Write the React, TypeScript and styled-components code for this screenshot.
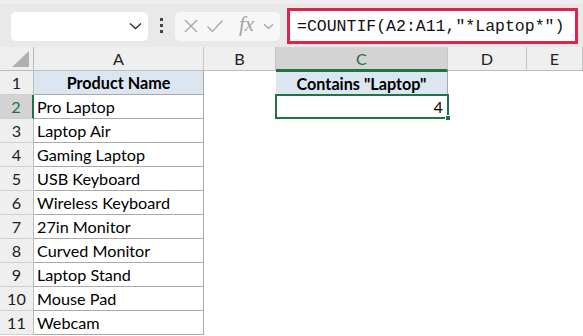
import styled, { createGlobalStyle } from "styled-components";

const GlobalStyle = createGlobalStyle`
  html, body {
    margin: 0;
    padding: 0;
    background: #ffffff;
  }
  * {
    box-sizing: border-box;
  }
`;

const products = [
  "Pro Laptop",
  "Laptop Air",
  "Gaming Laptop",
  "USB Keyboard",
  "Wireless Keyboard",
  "27in Monitor",
  "Curved Monitor",
  "Laptop Stand",
  "Mouse Pad",
  "Webcam",
];

const columns = ["A", "B", "C", "D", "E"];
const GREEN = "#217346";

export default function App() {
  return (
    <>
      <GlobalStyle />
      <Sheet>
        <FormulaBar>
          <NameBox>
            <Chevron width="13" height="8" viewBox="0 0 13 8">
              <path d="M1 1.5 L6.5 6.5 L12 1.5" fill="none" stroke="#333" strokeWidth="1.4" />
            </Chevron>
          </NameBox>
          <Dots>
            <span />
            <span />
            <span />
          </Dots>
          <FxBox>
            <svg width="16" height="16" viewBox="0 0 16 16">
              <path d="M2 2 L14 14 M14 2 L2 14" stroke="#a3a3a3" strokeWidth="1.2" fill="none" />
            </svg>
            <svg width="18" height="16" viewBox="0 0 18 16">
              <path d="M1.5 8.5 L6.5 13.5 L16.5 2.5" stroke="#a3a3a3" strokeWidth="1.2" fill="none" />
            </svg>
            <FxLabel>fx</FxLabel>
            <svg width="11" height="7" viewBox="0 0 11 7">
              <path d="M1 1.2 L5.5 5.5 L10 1.2" stroke="#a3a3a3" strokeWidth="1.2" fill="none" />
            </svg>
          </FxBox>
          <FormulaInput>=COUNTIF(A2:A11,"*Laptop*")</FormulaInput>
        </FormulaBar>

        <Grid>
          <Corner>
            <svg width="18" height="16" viewBox="0 0 18 16">
              <polygon points="17,0 17,16 0,16" fill="#b0b0b0" />
            </svg>
          </Corner>
          {columns.map((c) => (
            <ColHeader key={c} $active={c === "C"}>
              {c}
            </ColHeader>
          ))}

          {Array.from({ length: 11 }, (_, i) => {
            const row = i + 1;
            return [
              <RowHeader key={`h${row}`} $active={row === 2}>
                {row}
              </RowHeader>,
              <Cell
                key={`a${row}`}
                $bordered
                $fill={row === 1}
                $bold={row === 1}
                $align={row === 1 ? "center" : "left"}
              >
                {row === 1 ? "Product Name" : products[row - 2]}
              </Cell>,
              <Cell key={`b${row}`} />,
              row === 1 ? (
                <Cell key={`c${row}`} $bordered $fill $bold $align="center" $topGreen>
                  Contains "Laptop"
                </Cell>
              ) : row === 2 ? (
                <Selected key={`c${row}`}>
                  4
                  <Handle />
                </Selected>
              ) : (
                <Cell key={`c${row}`} />
              ),
              <Cell key={`d${row}`} />,
              <Cell key={`e${row}`} />,
            ];
          })}
        </Grid>
      </Sheet>
    </>
  );
}

const Sheet = styled.div`
  width: 583px;
  height: 336px;
  overflow: hidden;
  font-family: Lato, "Open Sans", sans-serif;
  color: #000;
`;

const FormulaBar = styled.div`
  height: 47px;
  background: #e9e9e9;
  display: flex;
  align-items: center;
  padding: 0 5px 0 11px;
  border-top: 4px solid #efefef;
`;

const NameBox = styled.div`
  width: 137px;
  height: 29px;
  margin-top: 1px;
  background: #fff;
  border-radius: 5px;
  display: flex;
  align-items: center;
  justify-content: flex-end;
  padding-right: 6px;
`;

const Chevron = styled.svg`
  display: block;
`;

const Dots = styled.div`
  width: 27px;
  display: flex;
  flex-direction: column;
  align-items: center;
  gap: 3px;

  & span {
    width: 3px;
    height: 3px;
    background: #444;
  }
`;

const FxBox = styled.div`
  width: 105px;
  height: 29px;
  margin-top: 1px;
  background: #f7f7f7;
  border-radius: 5px;
  display: flex;
  align-items: center;
  gap: 7px;
  padding-left: 8px;

  & svg {
    display: block;
    flex-shrink: 0;
  }
`;

const FxLabel = styled.span`
  font-family: "Liberation Serif", serif;
  font-style: italic;
  font-size: 21px;
  color: #a3a3a3;
  margin-left: 8px;
  margin-right: 2px;
  margin-top: -3px;
  flex-shrink: 0;
`;

const FormulaInput = styled.div`
  margin-left: 7px;
  width: 291px;
  height: 36px;
  margin-top: 1px;
  background: #fff;
  border: 3px solid #e1224b;
  display: flex;
  align-items: center;
  padding-left: 7px;
  font-family: "Liberation Mono", monospace;
  font-size: 16.5px;
  color: #111;
  white-space: nowrap;
`;

const Grid = styled.div`
  display: grid;
  grid-template-columns: 34px 170px 72px 172px 79px 1fr;
  grid-auto-rows: 24px;
  font-size: 16.2px;
`;

const Corner = styled.div`
  background: #efefef;
  border-right: 1px solid #bdbdbd;
  border-bottom: 1px solid #bdbdbd;
  display: flex;
  align-items: flex-end;
  justify-content: flex-end;
  padding: 0 3px 3px 0;
`;

const ColHeader = styled.div<{ $active?: boolean }>`
  background: ${(p) => (p.$active ? "#d3d3d3" : "#efefef")};
  border-right: 1px solid #c4c4c4;
  border-bottom: ${(p) => (p.$active ? `2px solid ${GREEN}` : "1px solid #bdbdbd")};
  display: flex;
  align-items: center;
  justify-content: center;
  color: ${(p) => (p.$active ? GREEN : "#222")};
`;

const RowHeader = styled.div<{ $active?: boolean }>`
  background: ${(p) => (p.$active ? "#d3d3d3" : "#efefef")};
  border-right: ${(p) => (p.$active ? `2px solid ${GREEN}` : "1px solid #bdbdbd")};
  border-bottom: 1px solid #cfcfcf;
  display: flex;
  align-items: center;
  justify-content: center;
  color: ${(p) => (p.$active ? GREEN : "#222")};
`;

const Cell = styled.div<{
  $bordered?: boolean;
  $fill?: boolean;
  $bold?: boolean;
  $align?: "left" | "center";
  $topGreen?: boolean;
}>`
  background: ${(p) => (p.$fill ? "#dce6f1" : "#fff")};
  border-right: 1px solid ${(p) => (p.$bordered ? "#a9a9a9" : "transparent")};
  border-bottom: 1px solid ${(p) => (p.$bordered ? "#a9a9a9" : "transparent")};
  ${(p) => (p.$topGreen ? `border-top: 1px solid ${GREEN};` : "")}
  display: flex;
  align-items: center;
  justify-content: ${(p) => (p.$align === "center" ? "center" : "flex-start")};
  padding: 0 3px;
  font-weight: ${(p) => (p.$bold ? 700 : 400)};
  white-space: nowrap;
`;

const Selected = styled.div`
  position: relative;
  border: 2px solid ${GREEN};
  display: flex;
  align-items: center;
  justify-content: flex-end;
  padding-right: 4px;
  margin: -1px -1px 0 -1px;
`;

const Handle = styled.span`
  position: absolute;
  right: -4px;
  bottom: -4px;
  width: 6px;
  height: 6px;
  background: ${GREEN};
  border: 1px solid #fff;
`;
